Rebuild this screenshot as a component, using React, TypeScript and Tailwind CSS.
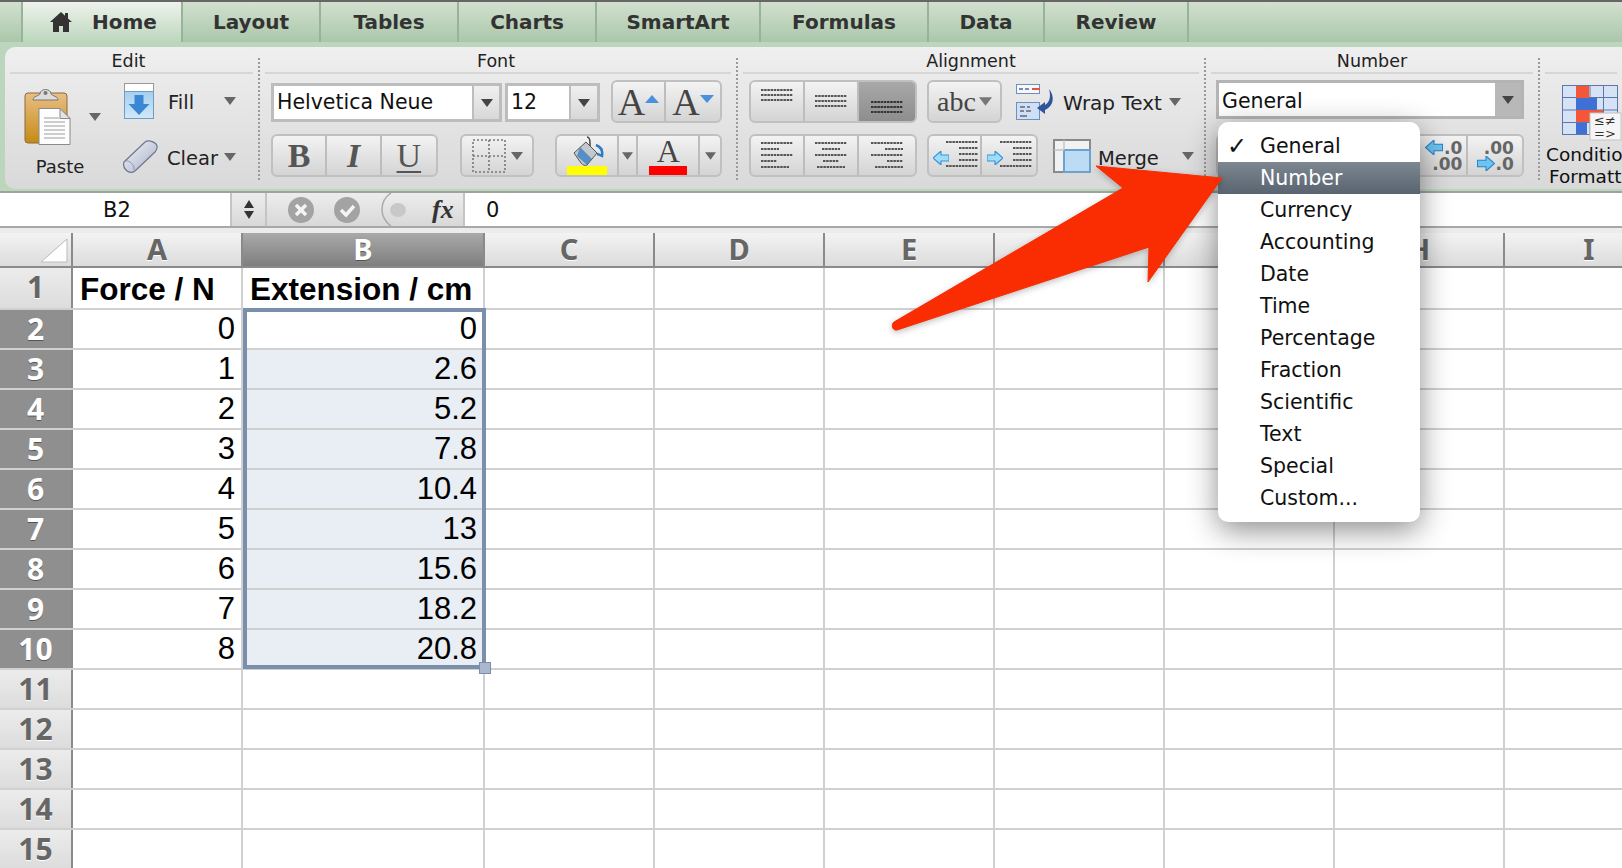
import type { ReactNode } from 'react';

const tabs = [
  { label: 'Layout', w: 'w-[138px]' },
  { label: 'Tables', w: 'w-[138px]' },
  { label: 'Charts', w: 'w-[138px]' },
  { label: 'SmartArt', w: 'w-[164px]' },
  { label: 'Formulas', w: 'w-[168px]' },
  { label: 'Data', w: 'w-[116px]' },
  { label: 'Review', w: 'w-[144px]' },
];

const columns = ['C', 'D', 'E', 'F', 'G', 'H', 'I'];
const data: [string, string][] = [
  ['0', '0'], ['1', '2.6'], ['2', '5.2'], ['3', '7.8'], ['4', '10.4'],
  ['5', '13'], ['6', '15.6'], ['7', '18.2'], ['8', '20.8'],
];
const menu = ['General', 'Number', 'Currency', 'Accounting', 'Date', 'Time', 'Percentage', 'Fraction', 'Scientific', 'Text', 'Special', 'Custom...'];

const groupBox = 'flex rounded-[6px] border-2 border-[#c0c0c0] bg-gradient-to-b from-[#f3f3f3] to-[#d4d4d4] overflow-hidden';

function Caret({ color = '#666', w = 12, h = 8 }: { color?: string; w?: number; h?: number }) {
  return (
    <svg width={w} height={h} viewBox="0 0 12 8" className="shrink-0">
      <path d="M0 0h12L6 8z" fill={color} />
    </svg>
  );
}

function Seg({ w, children, selected, last }: { w: string; children?: ReactNode; selected?: boolean; last?: boolean }) {
  return (
    <div className={`${w} h-full flex items-center justify-center ${last ? '' : 'border-r-2 border-[#bdbdbd]'} ${selected ? 'bg-gradient-to-b from-[#a8a8a8] to-[#8e8e8e]' : ''}`}>
      {children}
    </div>
  );
}

// dashed text lines, used by the alignment and indent buttons
function Lines({ rows, color = '#555' }: { rows: [number, number, number][]; color?: string }) {
  return (
    <svg width="34" height="34" viewBox="0 0 34 34">
      {rows.map(([x, y, w], i) => (
        <path key={i} d={`M${x} ${y}h${w}`} stroke={color} strokeWidth="2" strokeDasharray="2.5 0.7" />
      ))}
    </svg>
  );
}

function PasteIcon() {
  return (
    <svg width="48" height="60" viewBox="0 0 48 60">
      <defs>
        <linearGradient id="board" x1="0" y1="0" x2="0" y2="1">
          <stop offset="0" stopColor="#e8bf85" />
          <stop offset="1" stopColor="#c68a12" />
        </linearGradient>
      </defs>
      <rect x="1" y="6" width="42" height="50" rx="3" fill="url(#board)" stroke="#8a6a3c" />
      <path d="M9 13c0-4 6-4 7-6 0-6 11-6 11 0 1 2 7 2 7 6z" fill="#ddd" stroke="#777" />
      <circle cx="21.5" cy="6" r="2" fill="#777" />
      <path d="M15 21.500h21l10 10v26H15z" fill="#fdfdfd" stroke="#8a8a8a" />
      <path d="M36 21.500v10h10z" fill="#e4e4e4" stroke="#8a8a8a" />
      {[31, 35, 39, 43, 47, 51].map((y) => (
        <path key={y} d={`M20 ${y}h${y < 33 ? 15 : 21}`} stroke="#bdbdbd" strokeWidth="1.6" />
      ))}
    </svg>
  );
}

function FillIcon() {
  return (
    <svg width="30" height="36" viewBox="0 0 30 36">
      <defs>
        <linearGradient id="fillBody" x1="0" y1="0" x2="0" y2="1">
          <stop offset="0" stopColor="#a5cff0" />
          <stop offset="1" stopColor="#d2e8f8" />
        </linearGradient>
      </defs>
      <rect x="0.500" y="0.500" width="29" height="8" fill="#fff" stroke="#999" />
      <rect x="0.500" y="8.500" width="29" height="27" fill="url(#fillBody)" stroke="#6f9cc4" />
      <path d="M10.500 12h9v9h6L15 32 4.500 21h6z" fill="#3c86d6" />
    </svg>
  );
}

function EraserIcon() {
  return (
    <svg width="36" height="34" viewBox="0 0 36 34">
      <defs>
        <linearGradient id="eraser" x1="0" y1="0" x2="1" y2="1">
          <stop offset="0" stopColor="#f6f7fb" />
          <stop offset="1" stopColor="#a5adc6" />
        </linearGradient>
      </defs>
      <path d="M2 22 23 2c3-2 8-1 11 2 2 2 1 6-1 8L13 31c-3 2-6 2-9-1-2-2-3-5-2-8z" fill="url(#eraser)" stroke="#6d7690" strokeWidth="1.2" />
      <path d="M4 21c3-1 9 4 8 9" fill="none" stroke="#8c94ac" />
    </svg>
  );
}

function BucketIcon() {
  return (
    <svg width="34" height="32" viewBox="0 0 34 32">
      <path d="M17 1c2 0 3 2 3 6v8" fill="none" stroke="#444" strokeWidth="1.5" />
      <path d="M4 17 16 6l11 11-10 12c-2 1-4 0-6-2z" fill="#c4c8cc" stroke="#555" />
      <path d="M10 11l12 12-5 6-10-9z" fill="#2f7cc4" opacity="0.75" />
      <path d="M26 9c5 2 7 6 6 11-2-1-4-2-5-2" fill="none" stroke="#2f7cc4" strokeWidth="2.5" />
    </svg>
  );
}

function WrapIcon() {
  return (
    <svg width="42" height="38" viewBox="0 0 42 38">
      <rect x="0.500" y="1.500" width="23" height="9" fill="#f4f7fb" stroke="#6f8fc0" />
      <path d="M3 6h4M9 6h4" stroke="#667" strokeWidth="1.5" />
      <path d="M16 6h8" stroke="#e8533c" strokeWidth="2" />
      <rect x="0.500" y="19.500" width="23" height="17" fill="#cfe0f5" stroke="#6f8fc0" />
      <path d="M4 24h5M11 24h3M4 28h4M10 28h5M4 33h7" stroke="#667" strokeWidth="1.3" />
      <path d="M33 6c6 7 5 17-4 21v4l-8-6 8-6v3c5-3 6-9 4-16z" fill="#2f549c" />
    </svg>
  );
}

function MergeIcon() {
  return (
    <svg width="38" height="34" viewBox="0 0 38 34">
      <rect x="1" y="1" width="36" height="32" fill="#f2f2f2" stroke="#8a8a8a" strokeWidth="2" />
      <rect x="11" y="11" width="26" height="22" fill="#bcdcf6" stroke="#6da2cc" strokeWidth="2" />
      <path d="M1 11h10M11 1v10" stroke="#c4c4c4" strokeWidth="1.5" />
    </svg>
  );
}

function IndentArrow({ flip }: { flip?: boolean }) {
  return (
    <svg width="16" height="14" viewBox="0 0 16 14" className="absolute left-[2px] top-[14px]">
      <path d={flip ? 'M0 4h8V0l8 7-8 7v-4H0z' : 'M16 4H8V0L0 7l8 7v-4h8z'} fill="#9fdcf8" stroke="#3c94d8" strokeWidth="1.2" />
    </svg>
  );
}

function Round({ check }: { check?: boolean }) {
  return (
    <svg width="26" height="26" viewBox="0 0 26 26">
      <circle cx="13" cy="13" r="13" fill="#a3a3a3" />
      {check ? (
        <path d="M7 13l5 5 8-9" fill="none" stroke="#f4f4f4" strokeWidth="3.500" />
      ) : (
        <path d="M8 8l10 10M18 8 8 18" stroke="#f4f4f4" strokeWidth="3.500" />
      )}
    </svg>
  );
}

function CondIcon() {
  return (
    <svg width="60" height="56" viewBox="0 0 60 56" className="ml-[22px] shrink-0">
      <rect x="0.500" y="0.500" width="55" height="49" fill="#d6e2f6" stroke="#5d78a8" />
      <path d="M14.500 0v50M28 0v50M41.500 0v50M0 12.500h56M0 25h56M0 37.500h56" stroke="#5d78a8" />
      <rect x="14" y="1" width="13" height="12" fill="#f4563a" />
      <rect x="14" y="13" width="21" height="12" fill="#3e70d6" />
      <rect x="14" y="25" width="27" height="12" fill="#f4563a" />
      <rect x="14" y="38" width="11" height="11" fill="#3e70d6" />
      <rect x="28" y="28" width="31" height="27" fill="#f5f5f5" stroke="#c4c4c4" />
      <text x="32" y="40" fontSize="13" fill="#333" fontFamily="DejaVu Sans">≤≠</text>
      <text x="32" y="53" fontSize="13" fill="#333" fontFamily="DejaVu Sans">=&gt;</text>
    </svg>
  );
}

function RibbonTitle({ children, shift = '' }: { children?: ReactNode; shift?: string }) {
  return (
    <div className={`h-[27px] mx-[5px] border-b-2 border-[#d6d6d6] text-center text-[17.500px] leading-[29px] text-[#222] ${shift}`}>
      {children}
    </div>
  );
}

function Dots() {
  return <div className="w-0 mt-[11px] mb-[9px] border-l-2 border-dotted border-[#9a9a9a] shrink-0" />;
}

function Select({ w, btn, value }: { w: string; btn: string; value: string }) {
  return (
    <div className={`${w} h-[39px] mt-[2px] flex border-[3px] border-[#bdbdbd] bg-white`}>
      <div className="flex-1 text-[20.500px] leading-[32px] pl-[3px] text-[#111]">{value}</div>
      <div className={`${btn} border-l-2 border-[#bdbdbd] bg-gradient-to-b from-[#f0f0f0] to-[#d8d8d8] flex items-center justify-center`}>
        <Caret color="#444" />
      </div>
    </div>
  );
}

function Ribbon() {
  return (
    <div className="h-[151px] bg-[#bcd6bd] pl-[5px] pt-[5px] pb-[4px] border-b-2 border-[#9aa69a]">
      <div className="h-[142px] flex rounded-l-[10px] bg-gradient-to-b from-[#efefef] to-[#d9d9d9] overflow-hidden">
        {/* Edit */}
        <div className="w-[253px] shrink-0 flex flex-col">
          <RibbonTitle shift="pr-[6px]">Edit</RibbonTitle>
          <div className="flex pl-[19px] pt-[9px]">
            <div className="w-[48px] flex flex-col items-center">
              <div className="mt-[4px]"><PasteIcon /></div>
              <div className="text-[18px] leading-[22px] mt-[9px] ml-[24px] text-[#222]">Paste</div>
            </div>
            <div className="w-[52px] pl-[17px] pt-[30px]"><Caret /></div>
            <div className="flex flex-col">
              <div className="flex items-center h-[36px]">
                <FillIcon />
                <span className="text-[19.500px] ml-[14px] mt-[4px] w-[56px] text-[#222]">Fill</span>
                <Caret />
              </div>
              <div className="flex items-center h-[34px] mt-[21px] -ml-[2px]">
                <EraserIcon />
                <span className="text-[19.500px] ml-[9px] mt-[4px] w-[57px] text-[#222]">Clear</span>
                <Caret />
              </div>
            </div>
          </div>
        </div>
        <Dots />
        {/* Font */}
        <div className="w-[476px] shrink-0 flex flex-col">
          <RibbonTitle shift="pr-[4px]">Font</RibbonTitle>
          <div className="flex items-center pl-[11px] pt-[6px] h-[49px]">
            <Select w="w-[231px]" btn="w-[27px]" value="Helvetica Neue" />
            <div className="w-[3px]" />
            <Select w="w-[95px]" btn="w-[28px]" value="12" />
            <div className={`${groupBox} w-[111px] h-[43px] ml-[11px] font-['Liberation_Serif',serif] text-[38px] text-[#444]`}>
              <Seg w="w-[55px]">
                <span className="leading-[36px]">A</span>
                <svg width="14" height="8" viewBox="0 0 14 8" className="mb-[6px]"><path d="M7 0l7 8H0z" fill="#4a90dc" /></svg>
              </Seg>
              <Seg w="w-[56px]" last>
                <span className="leading-[36px]">A</span>
                <svg width="14" height="8" viewBox="0 0 14 8" className="mb-[6px]"><path d="M0 0h14L7 8z" fill="#4a90dc" /></svg>
              </Seg>
            </div>
          </div>
          <div className="flex items-center pl-[11px] pt-[11px]">
            <div className={`${groupBox} w-[167px] h-[43px] text-[34px] text-[#555] font-['Liberation_Serif',serif]`}>
              <Seg w="w-[55px]"><span className="font-bold">B</span></Seg>
              <Seg w="w-[55px]"><span className="italic font-bold">I</span></Seg>
              <Seg w="w-[55px]" last><span className="underline decoration-2 underline-offset-4">U</span></Seg>
            </div>
            <div className={`${groupBox} w-[74px] h-[43px] ml-[22px] items-center justify-center gap-[5px]`}>
              <svg width="34" height="34" viewBox="0 0 34 34">
                <path d="M1 1h32v32H1zM17 1v32M1 17h32" fill="none" stroke="#777" strokeWidth="1.6" strokeDasharray="2 2" />
              </svg>
              <Caret />
            </div>
            <div className={`${groupBox} w-[167px] h-[43px] ml-[21px]`}>
              <Seg w="w-[64px]">
                <div className="flex flex-col items-center">
                  <BucketIcon />
                  <div className="w-[40px] h-[10px] bg-[#ffff00] -mt-[2px]" />
                </div>
              </Seg>
              <Seg w="w-[19px]"><Caret w={11} /></Seg>
              <Seg w="w-[64px]">
                <div className="flex flex-col items-center">
                  <span className="font-['Liberation_Serif',serif] text-[32px] leading-[30px] text-[#444]">A</span>
                  <div className="w-[38px] h-[9px] bg-[#ff0000]" />
                </div>
              </Seg>
              <Seg w="w-[20px]" last><Caret w={11} /></Seg>
            </div>
          </div>
        </div>
        <Dots />
        {/* Alignment */}
        <div className="w-[466px] shrink-0 flex flex-col">
          <RibbonTitle>Alignment</RibbonTitle>
          <div className="flex items-center pl-[11px] pt-[6px] h-[49px]">
            <div className={`${groupBox} w-[168px] h-[43px]`}>
              <Seg w="w-[55px]"><Lines rows={[[1, 5, 32], [1, 10, 32], [1, 15, 32]]} /></Seg>
              <Seg w="w-[56px]"><Lines rows={[[1, 11, 32], [1, 16, 32], [1, 21, 32]]} /></Seg>
              <Seg w="w-[57px]" selected last><Lines rows={[[1, 17, 32], [1, 22, 32], [1, 27, 32]]} color="#333" /></Seg>
            </div>
            <div className={`${groupBox} w-[75px] h-[43px] ml-[10px] items-center justify-center gap-[3px]`}>
              <span className="font-['Liberation_Serif',serif] text-[28px] text-[#444]">abc</span>
              <Caret w={13} h={9} color="#777" />
            </div>
            <div className="ml-[14px]"><WrapIcon /></div>
            <span className="text-[20px] ml-[5px] mt-[2px] text-[#222] whitespace-nowrap">Wrap Text</span>
            <div className="ml-[7px]"><Caret /></div>
          </div>
          <div className="flex items-center pl-[11px] pt-[11px]">
            <div className={`${groupBox} w-[168px] h-[43px]`}>
              <Seg w="w-[55px]"><Lines rows={[[1, 4, 32], [1, 10, 18], [1, 16, 32], [1, 22, 16], [1, 28, 28]]} /></Seg>
              <Seg w="w-[56px]"><Lines rows={[[1, 4, 32], [8, 10, 18], [1, 16, 32], [9, 22, 16], [3, 28, 28]]} /></Seg>
              <Seg w="w-[57px]" last><Lines rows={[[1, 4, 32], [15, 10, 18], [1, 16, 32], [17, 22, 16], [5, 28, 28]]} /></Seg>
            </div>
            <div className={`${groupBox} w-[111px] h-[43px] ml-[10px]`}>
              <Seg w="w-[55px]">
                <div className="relative w-[48px] h-[38px] flex justify-end">
                  <IndentArrow />
                  <Lines rows={[[1, 5, 32], [14, 11, 19], [14, 17, 19], [14, 23, 19], [1, 29, 32]]} />
                </div>
              </Seg>
              <Seg w="w-[56px]" last>
                <div className="relative w-[48px] h-[38px] flex justify-end">
                  <IndentArrow flip />
                  <Lines rows={[[1, 5, 32], [14, 11, 19], [14, 17, 19], [14, 23, 19], [1, 29, 32]]} />
                </div>
              </Seg>
            </div>
            <div className="ml-[15px]"><MergeIcon /></div>
            <span className="text-[19.500px] ml-[7px] mt-[6px] w-[84px] text-[#222]">Merge</span>
            <Caret />
          </div>
        </div>
        <Dots />
        {/* Number */}
        <div className="w-[332px] shrink-0 flex flex-col">
          <RibbonTitle>Number</RibbonTitle>
          <div className="pl-[10px] pt-[6px] h-[45px]">
            <div className="w-[308px] h-[39px] flex border-[3px] border-[#b4b4b4] bg-white">
              <div className="flex-1 text-[20.500px] leading-[36px] pl-[3px] text-[#111]">General</div>
              <div className="w-[26px] bg-[#b8b8b8] flex items-center justify-center"><Caret color="#444" /></div>
            </div>
          </div>
          <div className="pl-[10px] pt-[15px]">
            <div className={`${groupBox} w-[308px] h-[43px]`}>
              <Seg w="w-[252px]">
                <div className="ml-auto flex flex-col items-end pr-[4px] text-[17px] leading-[16px] font-bold text-[#666]">
                  <span className="flex items-center gap-[1px]">
                    <svg width="18" height="15" viewBox="0 0 16 14"><path d="M16 4H8V0L0 7l8 7v-4h8z" fill="#6cc4f0" stroke="#2a80c8" /></svg>
                    .0
                  </span>
                  <span>.00</span>
                </div>
              </Seg>
              <Seg w="w-[54px]" last>
                <div className="flex flex-col items-end text-[17px] leading-[16px] font-bold text-[#666]">
                  <span>.00</span>
                  <span className="flex items-center gap-[1px]">
                    <svg width="18" height="15" viewBox="0 0 16 14"><path d="M0 4h8V0l8 7-8 7v-4H0z" fill="#6cc4f0" stroke="#2a80c8" /></svg>
                    .0
                  </span>
                </div>
              </Seg>
            </div>
          </div>
        </div>
        <Dots />
        {/* Conditional formatting, runs off the window */}
        <div className="flex-1 min-w-0 flex flex-col">
          <RibbonTitle />
          <div className="pt-[11px] h-[60px]"><CondIcon /></div>
          <div className="text-[18.500px] leading-[22px] pl-[6px] mt-[10px] text-[#111] whitespace-nowrap">Conditional</div>
          <div className="text-[18.500px] leading-[22px] pl-[9px] text-[#111] whitespace-nowrap">Formatting</div>
        </div>
      </div>
    </div>
  );
}

function FormulaBar() {
  return (
    <div className="h-[33px] flex border-b-2 border-[#a8a8a8] box-content">
      <div className="w-[230px] pl-[4px] text-center text-[21px] leading-[35px] text-[#111]">B2</div>
      <div className="w-[37px] flex flex-col items-center justify-center gap-[3px] bg-gradient-to-b from-[#ededed] to-[#d8d8d8] border-x-2 border-[#c4c4c4]">
        <svg width="10" height="8" viewBox="0 0 10 8"><path d="M5 0l5 8H0z" fill="#333" /></svg>
        <svg width="10" height="8" viewBox="0 0 10 8"><path d="M0 0h10L5 8z" fill="#333" /></svg>
      </div>
      <div className="w-[198px] flex items-center pl-[21px] bg-gradient-to-b from-[#ededed] to-[#d8d8d8] border-r-2 border-[#c4c4c4]">
        <Round />
        <div className="ml-[20px]"><Round check /></div>
        <svg width="30" height="33" viewBox="0 0 30 33" className="ml-[20px]">
          <path d="M11 0C-1 8-1 24 11 33" fill="none" stroke="#aaa" strokeWidth="1.5" />
          <ellipse cx="18" cy="17" rx="8" ry="7" fill="#c8c8c8" />
        </svg>
        <span className="font-['Liberation_Serif',serif] italic font-bold text-[26px] text-[#333] ml-[22px]">fx</span>
      </div>
      <div className="flex-1 text-[21px] leading-[35px] pl-[21px] text-[#111]">0</div>
    </div>
  );
}

const headFont = "font-['Noto_Sans',sans-serif] font-bold text-[29px] text-[#666] [text-shadow:0_1px_0_#fff]";
const cellFont = "font-['Liberation_Sans',sans-serif] text-black";

function Sheet() {
  return (
    <div className="relative border-t-[5px] border-[#ececec]">
      {/* column headers */}
      <div className="h-[35px] flex border-b-2 border-[#8a8a8a] bg-gradient-to-b from-[#f3f3f3] to-[#dcdcdc]">
        <div className="w-[73px] shrink-0 border-r-2 border-[#8a8a8a] flex items-end justify-end pr-[3px] pb-[3px]">
          <svg width="27" height="24" viewBox="0 0 27 24"><path d="M26 0v23H0z" fill="#fff" stroke="#bbb" /></svg>
        </div>
        <div className={`w-[170px] shrink-0 border-r-2 border-[#8a8a8a] text-center leading-[31px] ${headFont}`}>A</div>
        <div className="w-[242px] shrink-0 border-r-2 border-[#8a8a8a] text-center leading-[31px] bg-gradient-to-b from-[#a9a9a9] to-[#7f7f7f] font-['Noto_Sans',sans-serif] font-bold text-[29px] text-white [text-shadow:0_1px_0_#555]">B</div>
        {columns.map((c) => (
          <div key={c} className={`w-[170px] shrink-0 border-r-2 border-[#8a8a8a] text-center leading-[31px] ${headFont}`}>{c}</div>
        ))}
      </div>
      {/* rows */}
      {Array.from({ length: 15 }, (_, i) => {
        const n = i + 1;
        const row = i >= 1 && i <= 9 ? data[i - 1] : null;
        const picked = row !== null;
        const title = n === 1;
        const cell = title ? 'font-bold text-left pl-[7px] text-[31.500px] leading-[42px]' : 'text-right text-[31px] leading-[38px]';
        return (
          <div key={n} className={`flex ${title ? 'h-[42px]' : 'h-[40px]'} border-b-2 border-[#d0d0d0]`}>
            <div
              className={`w-[73px] shrink-0 border-r-2 border-[#8a8a8a] text-center leading-[38px] font-['Noto_Sans',sans-serif] font-bold text-[30px] ${
                picked ? 'bg-[#8f8f8f] text-white [text-shadow:0_1px_0_#555]' : 'bg-gradient-to-b from-[#ececec] to-[#dcdcdc] text-[#666] [text-shadow:0_1px_0_#fff]'
              }`}
            >
              {n}
            </div>
            <div className={`w-[170px] shrink-0 border-r-2 border-[#d0d0d0] pr-[6px] ${cellFont} ${cell}`}>
              {title ? 'Force / N' : row?.[0]}
            </div>
            <div className={`w-[242px] shrink-0 border-r-2 border-[#d0d0d0] pr-[6px] ${cellFont} ${cell} ${n > 2 && picked ? 'bg-[#e9edf4]' : ''}`}>
              {title ? 'Extension / cm' : row?.[1]}
            </div>
            {columns.map((c) => (
              <div key={c} className="w-[170px] shrink-0 border-r-2 border-[#d0d0d0]" />
            ))}
          </div>
        );
      })}
      {/* selection outline over B2:B10 */}
      <div className="absolute left-[243px] top-[75px] w-[243px] h-[361px] border-4 border-[#7a8fab] pointer-events-none">
        <div className="absolute right-[-9px] bottom-[-9px] w-[12px] h-[12px] bg-[#a9b8cc] border border-[#7a8fab]" />
      </div>
    </div>
  );
}

function NumberMenu() {
  return (
    <div className="absolute left-[1218px] top-[122px] w-[202px] h-[400px] rounded-[10px] bg-white pt-[8px] shadow-[0_8px_30px_rgba(0,0,0,0.45)] text-[20.500px] text-[#111] overflow-hidden">
      {menu.map((m, i) => (
        <div
          key={m}
          className={`h-[32px] leading-[33px] pl-[42px] relative ${i === 1 ? 'bg-gradient-to-b from-[#7d8791] to-[#5a6470] text-white' : ''}`}
        >
          {i === 0 && <span className="absolute left-[9px] top-0 text-[24px] font-bold">✓</span>}
          {m}
        </div>
      ))}
    </div>
  );
}

function Arrow() {
  return (
    <svg width="340" height="175" viewBox="0 0 340 175" className="absolute left-[890px] top-[160px] pointer-events-none drop-shadow-[0_2px_3px_rgba(0,0,0,0.25)]">
      <path
        d="M332 18 206 6 233 28 4 162c-3 2-2 9 3 8L259 87l-1 35z"
        fill="#f92c02"
        stroke="#f92c02"
        strokeLinejoin="round"
      />
    </svg>
  );
}

export default function App() {
  return (
    <div className="relative w-[1622px] h-[868px] overflow-hidden bg-white font-['DejaVu_Sans',sans-serif]">
      {/* Tabs */}
      <div className="h-[42px] flex border-t-2 border-[#666] bg-gradient-to-b from-[#d2e0cf] to-[#aac7aa]">
        <div className="w-[23px] border-r-2 border-[#98b498]" />
        <div className="w-[160px] flex items-center gap-[20px] pl-[27px] bg-gradient-to-b from-[#eef3ec] to-[#bcd6bd] border-r-2 border-[#98b498] text-[20px] font-bold text-[#333]">
          <svg width="22" height="20" viewBox="0 0 22 20" className="shrink-0">
            <path d="M11 0 0 10h3v10h6v-6h4v6h6V10h3l-4-3.600V1h-3v2.700z" fill="#333" />
          </svg>
          Home
        </div>
        {tabs.map((t) => (
          <div key={t.label} className={`${t.w} border-r-2 border-[#98b498] text-center text-[20px] leading-[41px] font-bold text-[#333]`}>
            {t.label}
          </div>
        ))}
      </div>
      <Ribbon />
      <FormulaBar />
      <Sheet />
      <NumberMenu />
      <Arrow />
    </div>
  );
}
